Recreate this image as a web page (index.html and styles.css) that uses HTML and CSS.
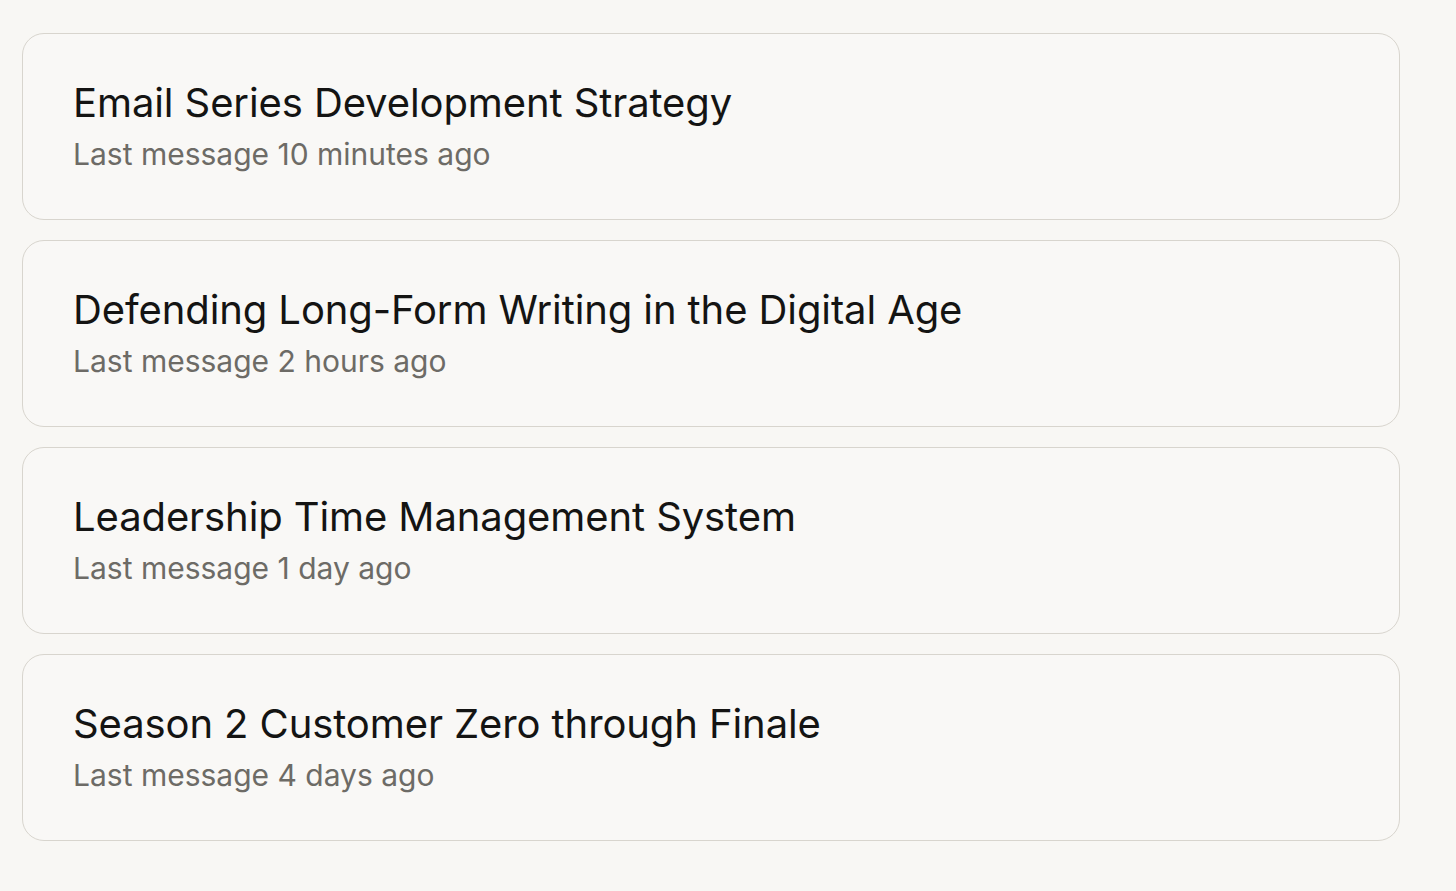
FILE: index.html
```html
<!DOCTYPE html>
<html lang="en">
<head>
<meta charset="utf-8">
<link rel="stylesheet" href="styles.css">
</head>
<body>
<main class="list">
  <div class="card">
    <div class="title">Email Series Development Strategy</div>
    <div class="meta">Last message 10 minutes ago</div>
  </div>
  <div class="card">
    <div class="title">Defending Long-Form Writing in the Digital Age</div>
    <div class="meta">Last message 2 hours ago</div>
  </div>
  <div class="card">
    <div class="title">Leadership Time Management System</div>
    <div class="meta">Last message 1 day ago</div>
  </div>
  <div class="card">
    <div class="title">Season 2 Customer Zero through Finale</div>
    <div class="meta">Last message 4 days ago</div>
  </div>
</main>
</body>
</html>
```

FILE: styles.css
```css
html, body {
  margin: 0;
  padding: 0;
  background: #f8f7f4;
}
body {
  font-family: Inter, "Noto Sans", sans-serif;
}
.list {
  display: flex;
  flex-direction: column;
  gap: 20px;
  padding: 33px 0 0 22px;
  width: 1378px;
}
.card {
  box-sizing: border-box;
  height: 187px;
  border: 1px solid #d8d5ce;
  border-radius: 22px;
  background: #f9f8f6;
  padding: 45px 51px 0 50px;
}
.title {
  font-size: 40px;
  line-height: 48px;
  color: #141413;
  letter-spacing: -0.1px;
}
.meta {
  margin-top: 9px;
  font-size: 30px;
  line-height: 36px;
  color: #6d6b66;
}
```
